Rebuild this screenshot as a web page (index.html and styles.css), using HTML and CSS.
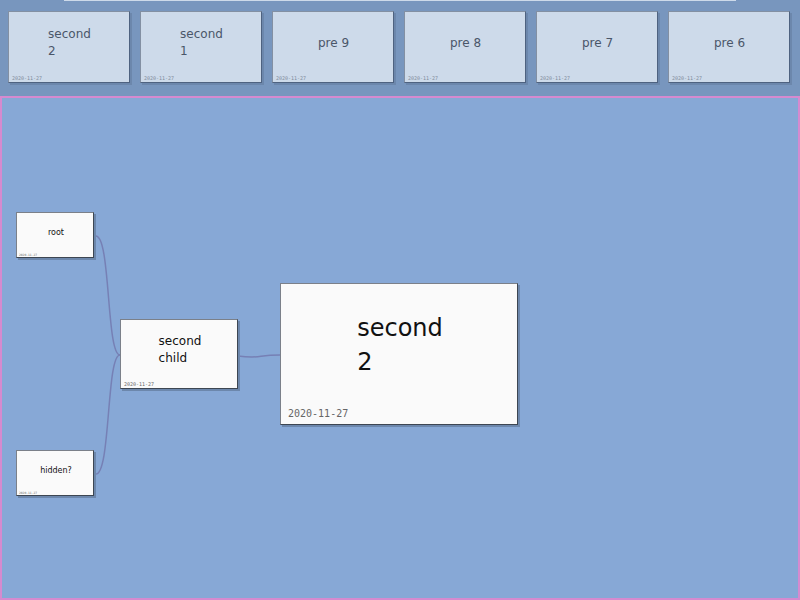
FILE: index.html
```
<!DOCTYPE html>
<html lang="en">
<head>
<meta charset="utf-8">
<title>Mind map</title>
<link rel="stylesheet" href="styles.css">
</head>
<body>
<header class="tray">
  <div class="tray-handle"></div>
  <div class="tray-cards">
    <article class="card card-small"><p class="title">second<br>2</p><time class="date">2020-11-27</time></article>
    <article class="card card-small"><p class="title">second<br>1</p><time class="date">2020-11-27</time></article>
    <article class="card card-small"><p class="title">pre 9</p><time class="date">2020-11-27</time></article>
    <article class="card card-small"><p class="title">pre 8</p><time class="date">2020-11-27</time></article>
    <article class="card card-small"><p class="title">pre 7</p><time class="date">2020-11-27</time></article>
    <article class="card card-small"><p class="title">pre 6</p><time class="date">2020-11-27</time></article>
  </div>
</header>
<main class="canvas">
  <svg class="edges" width="300" height="420" viewBox="0 0 300 420" aria-hidden="true">
    <path d="M93 138C109 134 104 257 118 257"/>
    <path d="M93 376C109 380 104 257 118 257"/>
    <path d="M236 258C260 261 254 257 278 257"/>
  </svg>
  <article class="card card-tiny node-root"><p class="title">root</p><time class="date">2020-11-27</time></article>
  <article class="card card-tiny node-hidden"><p class="title">hidden?</p><time class="date">2020-11-27</time></article>
  <article class="card card-small node-child"><p class="title">second<br>child</p><time class="date">2020-11-27</time></article>
  <article class="card card-large node-current"><p class="title">second<br>2</p><time class="date">2020-11-27</time></article>
</main>
</body>
</html>
```
FILE: styles.css
```
* { box-sizing: border-box; }

body {
  margin: 0;
  min-height: 100vh;
  display: flex;
  flex-direction: column;
  background: #87a8d6;
  color: #111;
  font-family: "DejaVu Sans", sans-serif;
}

.tray {
  height: 96px;
  background: #7896be;
}

.tray-handle {
  height: 1px;
  margin: 0 8%;
  background: #cddaea;
}

.tray-cards {
  display: grid;
  grid-template-columns: repeat(6, 1fr);
  gap: 10px;
  padding: 10px 10px 0 8px;
}

.card {
  position: relative;
  display: flex;
  align-items: center;
  justify-content: center;
  padding-left: 2px;
  background: #fafafa;
  border: 1px solid;
  border-color: #7b8089 #3d4652 #3d4652 #7b8089;
  box-shadow: 2px 2px 0 #6c87ac;
}

.title { margin: 0; }

.date {
  position: absolute;
  color: #666;
  font-family: "DejaVu Sans Mono", monospace;
}

.card-small { height: 70px; padding-bottom: 8px; font-size: 12px; line-height: 17px; }
.card-small .date { left: 3px; bottom: 1px; font-size: 5px; line-height: 6px; }

.card-tiny { width: 78px; height: 46px; padding-bottom: 4px; font-size: 8px; line-height: 12px; }
.card-tiny .date { left: 2px; bottom: 0; font-size: 3px; line-height: 4px; }

.card-large { width: 238px; height: 142px; padding-bottom: 18px; font-size: 24px; line-height: 34px; }
.card-large .date { left: 7px; bottom: 4px; font-size: 10px; line-height: 12px; }

.tray .card {
  height: 72px;
  padding-left: 1px;
  background: #cddaea;
  border-color: #8390a3 #4e6280 #4e6280 #8390a3;
  color: #4a5669;
}
.tray .date { color: #7f8a9a; }

.canvas {
  position: relative;
  flex: 1;
  overflow: hidden;
  border: 2px solid #d68acf;
}

.edges {
  position: absolute;
  left: 0;
  top: 0;
  fill: none;
  stroke: #7680b5;
  stroke-width: 1.5;
}

.canvas .card { position: absolute; }
.node-root { left: 14px; top: 114px; }
.node-hidden { left: 14px; top: 352px; }
.node-child { left: 118px; top: 221px; width: 118px; }
.node-current { left: 278px; top: 185px; }
```
